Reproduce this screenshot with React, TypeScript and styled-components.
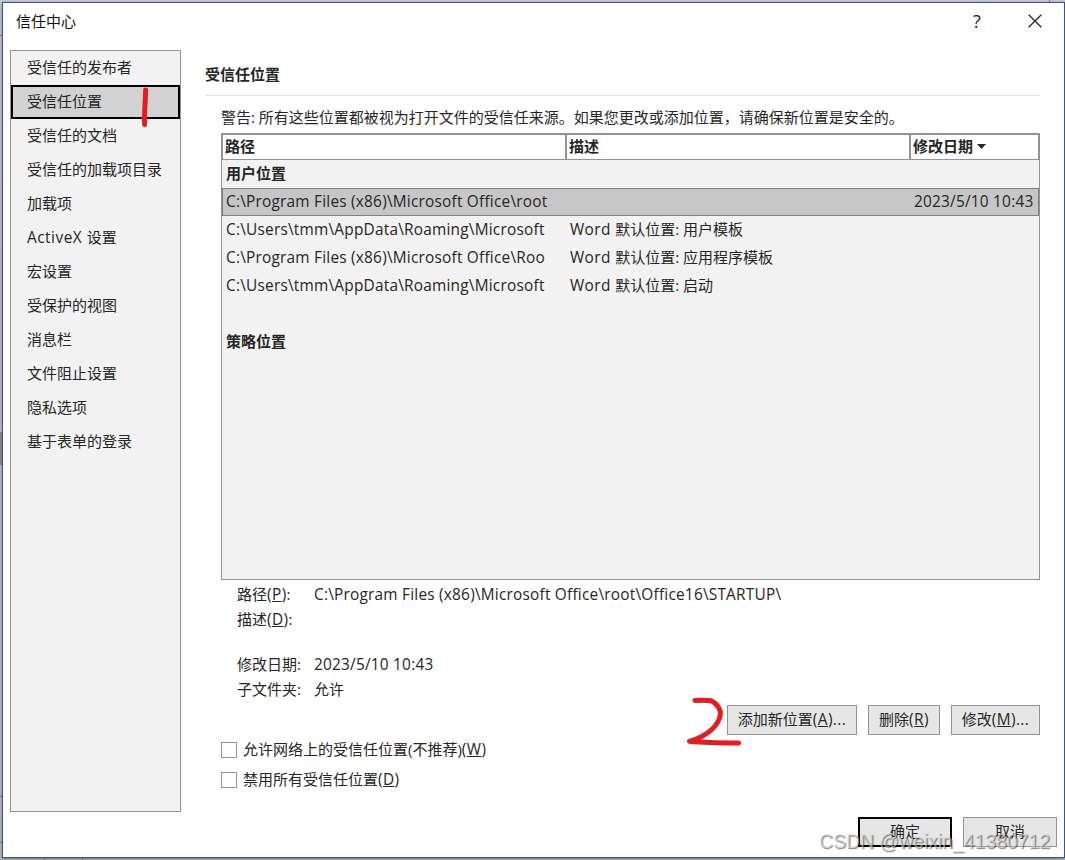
import React, { FC, ReactNode } from 'react';
import styled, { createGlobalStyle } from 'styled-components';

const GlobalStyle = createGlobalStyle`
    *,
    *::before {
        box-sizing: border-box;
    }
    body {
        margin: 0;
        overflow: hidden;
        font-family: 'Open Sans', 'Noto Sans CJK SC', sans-serif;
        font-size: 15px;
        line-height: 20px;
        color: #262626;
    }
`;

const Desktop = styled.div`
    position: relative;
    width: 1065px;
    height: 860px;
    padding: 2px 0 0 2px;
    background: linear-gradient(#c9c9c9, #bdbdbd);
`;

/* pieces of the window behind the dialog */
const BackEdge = styled.i<{ $x: number; $y: number; $w: number; $h: number; $color?: string }>`
    position: absolute;
    left: ${(p) => p.$x}px;
    top: ${(p) => p.$y}px;
    width: ${(p) => p.$w}px;
    height: ${(p) => p.$h}px;
    background: ${(p) => p.$color || '#777'};
`;

const Dialog = styled.div`
    position: relative;
    display: flex;
    flex-direction: column;
    width: 1063px;
    height: 856px;
    border: 1px solid #2b579a;
    background: #fff;
    box-shadow: 0 1px 3px rgba(0, 0, 0, 0.4);
`;

/* latin runs are set a little wider than the 15px chinese text */
const Latin = styled.span<{ $spacing?: number }>`
    font-size: 15.4px;
    letter-spacing: ${(p) => p.$spacing ?? 0.22}px;
`;

const TitleBar = styled.header`
    display: flex;
    justify-content: space-between;
    height: 47px;
    padding: 8px 22px 0 13px;
`;

const TitleText = styled.span`
    line-height: 21px;
    color: #111;
`;

const TitleActions = styled.div`
    display: flex;
    gap: 46px;
    height: 20px;

    svg {
        display: block;
        margin-top: 3px;
    }
`;

const HelpMark = styled.span`
    width: 10px;
    font-size: 18px;
    text-align: center;
`;

const Columns = styled.div`
    display: flex;
    align-items: flex-start;
    height: 762px;
    padding-left: 7px;
`;

const Sidebar = styled.nav`
    width: 171px;
    height: 762px;
    border: 1px solid #939393;
    background: #f2f2f2;
`;

const NavItem = styled.div<{ $active?: boolean }>`
    height: 34px;
    padding-left: ${(p) => (p.$active ? 14 : 16)}px;
    border: ${(p) => (p.$active ? '2px solid #000' : 'none')};
    background: ${(p) => (p.$active ? '#d2d2d2' : 'transparent')};
    line-height: ${(p) => (p.$active ? 28 : 32)}px;
    white-space: nowrap;
`;

const Main = styled.main`
    width: 835px;
    margin-left: 24px;
`;

const Heading = styled.h1`
    height: 46px;
    margin: 0;
    padding-top: 14px;
    border-bottom: 1px solid #e3e3e3;
    font-size: 15px;
    line-height: 20px;
    font-weight: 700;
`;

const Body = styled.section`
    padding-left: 16px;
`;

const Warning = styled.p`
    height: 37px;
    margin: 0;
    padding-top: 11px;
    white-space: nowrap;
`;

const List = styled.div`
    height: 447px;
    border: 1px solid #939393;
    background: #f2f2f2;
`;

const cols = '344px 344px 1fr';

const ListHead = styled.div`
    display: grid;
    grid-template-columns: ${cols};
    height: 26px;
    border: solid #939393;
    border-width: 1px 1px 1px 0;
    background: #fff;
    font-weight: 700;
    line-height: 22px;
`;

const HeadCell = styled.div<{ $first?: boolean }>`
    display: flex;
    gap: 4px;
    padding-left: 2px;
    border-left: ${(p) => (p.$first ? 1 : 2)}px solid #939393;
    margin-left: ${(p) => (p.$first ? 0 : -1)}px;

    svg {
        margin-top: 9px;
    }
`;

const Row = styled.div<{ $selected?: boolean }>`
    display: grid;
    grid-template-columns: ${cols};
    height: 28px;
    line-height: 25px;
    border: 1px solid ${(p) => (p.$selected ? '#7f7f7f' : 'transparent')};
    background: ${(p) => (p.$selected ? '#c6c6c6' : 'transparent')};
    white-space: nowrap;
`;

const Cell = styled.div`
    padding-left: 3px;
`;

const Group = styled.div`
    height: 28px;
    padding-left: 4px;
    font-weight: 700;
    line-height: 27px;
`;

const Details = styled.dl`
    display: grid;
    grid-template-columns: 77px 1fr;
    grid-template-rows: 25px 25px 20px 25px 25px;
    margin: 0;
    padding: 2px 0 0 16px;
    line-height: 25px;

    dt,
    dd {
        margin: 0;
    }
`;

const Gap = styled.div`
    grid-column: 1 / 3;
`;

const Actions = styled.div`
    display: flex;
    justify-content: flex-end;
    gap: 11px;
    margin-top: 3px;
`;

const Button = styled.button<{ $width: number; $primary?: boolean }>`
    width: ${(p) => p.$width}px;
    height: 30px;
    padding: 0 0 2px;
    border: ${(p) => (p.$primary ? '2px solid #000' : '1px solid #939393')};
    background: #e6e6e6;
    color: #262626;
    font: inherit;
    white-space: nowrap;
`;

const Checks = styled.div`
    display: grid;
    gap: 10px;
    margin-top: 5px;
`;

const Check = styled.div`
    display: flex;
    gap: 6px;
    height: 20px;
    line-height: 18px;

    &::before {
        content: '';
        width: 16px;
        height: 16px;
        margin-top: 2px;
        border: 1px solid #939393;
        background: #fff;
    }
`;

const Footer = styled.footer`
    display: flex;
    justify-content: flex-end;
    gap: 11px;
    padding: 5px 7px 0 0;
`;

const Marks = styled.svg`
    position: absolute;
    left: 0;
    top: 0;
    pointer-events: none;
`;

const Watermark = styled.div`
    position: absolute;
    left: 819px;
    top: 829px;
    font-family: 'Liberation Sans', sans-serif;
    font-size: 19.4px;
    line-height: 24px;
    color: rgba(225, 225, 225, 0.6);
    text-shadow: 1px 1px 1px rgba(0, 0, 0, 0.5);
    white-space: nowrap;
`;

const navItems: ReactNode[] = [
    '受信任的发布者',
    '受信任位置',
    '受信任的文档',
    '受信任的加载项目录',
    '加载项',
    <>
        <Latin $spacing={0.5}>ActiveX </Latin>设置
    </>,
    '宏设置',
    '受保护的视图',
    '消息栏',
    '文件阻止设置',
    '隐私选项',
    '基于表单的登录',
];

const locations = [
    { path: 'C:\\Program Files (x86)\\Microsoft Office\\root', desc: '', date: '2023/5/10 10:43' },
    { path: 'C:\\Users\\tmm\\AppData\\Roaming\\Microsoft', desc: '默认位置: 用户模板', date: '' },
    { path: 'C:\\Program Files (x86)\\Microsoft Office\\Roo', desc: '默认位置: 应用程序模板', date: '' },
    { path: 'C:\\Users\\tmm\\AppData\\Roaming\\Microsoft', desc: '默认位置: 启动', date: '' },
];

const Key: FC<{ children: ReactNode }> = ({ children }) => (
    <Latin $spacing={0.4}>
        (<u>{children}</u>)
    </Latin>
);

const App: FC = () => {
    return (
        <Desktop>
            <GlobalStyle />
            <BackEdge $x={0} $y={35} $w={2} $h={1} />
            <BackEdge $x={0} $y={432} $w={2} $h={33} $color="#8f8f8f" />
            <BackEdge $x={0} $y={796} $w={2} $h={1} />
            <BackEdge $x={0} $y={842} $w={2} $h={1} />
            <BackEdge $x={44} $y={858} $w={1} $h={2} />
            <BackEdge $x={82} $y={858} $w={1} $h={2} />
            <BackEdge $x={1049} $y={0} $w={1} $h={2} />
            <Dialog>
                <TitleBar>
                    <TitleText>信任中心</TitleText>
                    <TitleActions>
                        <HelpMark>?</HelpMark>
                        <svg width="14" height="14" viewBox="0 0 14 14" stroke="#262626" strokeWidth="1.3">
                            <path d="M0.7 0.7L13.3 13.3M13.3 0.7L0.7 13.3" />
                        </svg>
                    </TitleActions>
                </TitleBar>
                <Columns>
                    <Sidebar>
                        {navItems.map((item, index) => (
                            <NavItem key={index} $active={index === 1}>
                                {item}
                            </NavItem>
                        ))}
                    </Sidebar>
                    <Main>
                        <Heading>受信任位置</Heading>
                        <Body>
                            <Warning>
                                警告: 所有这些位置都被视为打开文件的受信任来源。如果您更改或添加位置，请确保新位置是安全的。
                            </Warning>
                            <List>
                                <ListHead>
                                    <HeadCell $first>路径</HeadCell>
                                    <HeadCell>描述</HeadCell>
                                    <HeadCell>
                                        修改日期
                                        <svg width="9" height="5" viewBox="0 0 9 5" fill="#262626">
                                            <path d="M0 0H9L4.5 5Z" />
                                        </svg>
                                    </HeadCell>
                                </ListHead>
                                <Group>用户位置</Group>
                                {locations.map((item, index) => (
                                    <Row key={index} $selected={index === 0}>
                                        <Cell>
                                            <Latin>{item.path}</Latin>
                                        </Cell>
                                        <Cell>
                                            {item.desc && <Latin $spacing={0.4}>Word </Latin>}
                                            {item.desc}
                                        </Cell>
                                        <Cell>
                                            <Latin>{item.date}</Latin>
                                        </Cell>
                                    </Row>
                                ))}
                                <Row />
                                <Group>策略位置</Group>
                            </List>
                            <Details>
                                <dt>
                                    路径<Key>P</Key>:
                                </dt>
                                <dd>
                                    <Latin>C:\Program Files (x86)\Microsoft Office\root\Office16\STARTUP\</Latin>
                                </dd>
                                <dt>
                                    描述<Key>D</Key>:
                                </dt>
                                <dd />
                                <Gap />
                                <dt>修改日期:</dt>
                                <dd>
                                    <Latin>2023/5/10 10:43</Latin>
                                </dd>
                                <dt>子文件夹:</dt>
                                <dd>允许</dd>
                            </Details>
                            <Actions>
                                <Button $width={130}>
                                    添加新位置<Key>A</Key>
                                    <Latin $spacing={0.4}>...</Latin>
                                </Button>
                                <Button $width={72}>
                                    删除<Key>R</Key>
                                </Button>
                                <Button $width={89}>
                                    修改<Key>M</Key>
                                    <Latin $spacing={0.4}>...</Latin>
                                </Button>
                            </Actions>
                            <Checks>
                                <Check>
                                    <span>
                                        允许网络上的受信任位置(不推荐)<Key>W</Key>
                                    </span>
                                </Check>
                                <Check>
                                    <span>
                                        禁用所有受信任位置<Key>D</Key>
                                    </span>
                                </Check>
                            </Checks>
                        </Body>
                    </Main>
                </Columns>
                <Footer>
                    <Button $width={94} $primary>
                        确定
                    </Button>
                    <Button $width={94}>取消</Button>
                </Footer>
            </Dialog>
            <Marks
                width="1065"
                height="860"
                fill="none"
                stroke="#e81b1f"
                strokeWidth="5"
                strokeLinecap="round"
                strokeLinejoin="round"
            >
                <path d="M145.6 90C145.4 102 144.2 112 144.5 124.5" />
                <path d="M695 700.5C702 700.2 707 700 711 700.8C718 704 721 710 720.3 715C719 724 709 736 689.5 741.3C706 743 722 743 738.5 743" />
            </Marks>
            <Watermark>CSDN @weixin_41380712</Watermark>
        </Desktop>
    );
};
export default App;
